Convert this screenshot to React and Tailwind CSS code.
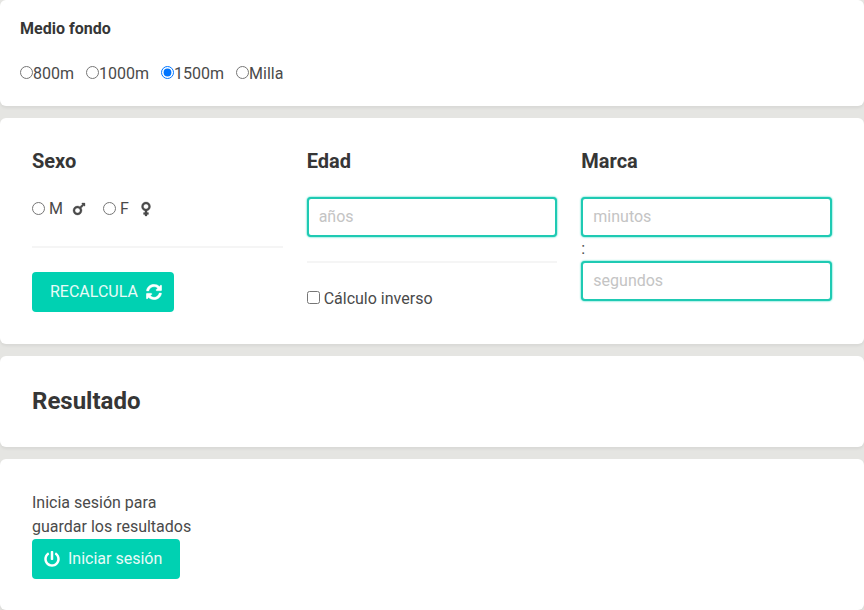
import React from 'react';
import { FaMars, FaVenus, FaSyncAlt, FaPowerOff } from 'react-icons/fa';

const Card = ({ className, children }) => (
    <div className={`bg-white rounded-md shadow-[0_2px_3px_rgba(0,0,0,0.06)] ${className}`}>{children}</div>
);

const inputClass = "block w-full h-10 px-[10px] pb-[2px] bg-white border-2 border-[#1fcab3] rounded-[4px] shadow-[0_0_2px_#00d1b2] text-base text-[#363636] outline-none placeholder:text-[#c4c4c4]";

const Distance = ({ label, checked, className }) => (
    <label className={`flex items-center ${className}`}>
        <input type="radio" name="distance" defaultChecked={checked} className="w-[13px] h-[13px] m-0 mb-[4px] accent-[#0075ff]" />
        <span>{label}</span>
    </label>
);

export default function App() {
    return (
        <div className="min-h-[610px] h-[610px] overflow-hidden bg-[#e5e5e2] text-[#4a4a4a] text-base font-['Roboto',sans-serif]">
            <Card className="h-[106px] pl-5 pt-[19px]">
                <h4 className="text-base text-[#363636] font-bold leading-[19px]">Medio fondo</h4>
                <div className="flex mt-[26px] leading-[20px]">
                    <Distance label="800m" className="mr-3" />
                    <Distance label="1000m" className="mr-3" />
                    <Distance label="1500m" checked className="mr-3" />
                    <Distance label="Milla" />
                </div>
            </Card>

            <Card className="mt-3 h-[226px] px-8 pt-8 grid grid-cols-3 gap-x-6">
                <div>
                    <h3 className="text-xl text-[#363636] font-bold leading-[24px] mt-[-1px]">Sexo</h3>
                    <div className="flex items-center mt-6 h-[24px] leading-[24px]">
                        <input type="radio" name="sexo" className="w-[13px] h-[13px] m-0 mr-1 mb-[2px] accent-[#0075ff]" />
                        <span>M</span>
                        <FaMars stroke="currentColor" strokeWidth="10" className="ml-[8px] w-4 h-4" />
                        <input type="radio" name="sexo" className="w-[13px] h-[13px] m-0 ml-[16px] mr-1 mb-[2px] accent-[#0075ff]" />
                        <span>F</span>
                        <FaVenus stroke="currentColor" strokeWidth="10" className="ml-[9px] w-4 h-4" />
                    </div>
                    <hr className="border-0 h-[2px] bg-[#f5f5f5] mt-[25px]" />
                    <button className="flex items-center mt-6 pl-[18px] w-[142px] h-10 bg-[#00d1b2] text-[#e8fbf8] rounded-[4px]">
                        RECALCULA
                        <FaSyncAlt stroke="currentColor" strokeWidth="10" className="ml-2 w-4 h-4 text-white" />
                    </button>
                </div>
                <div>
                    <h3 className="text-xl text-[#363636] font-bold leading-[24px] mt-[-1px]">Edad</h3>
                    <input placeholder="años" className={`${inputClass} mt-6`} />
                    <hr className="border-0 h-[2px] bg-[#f5f5f5] mt-6" />
                    <label className="flex items-center mt-6 leading-[24px]">
                        <input type="checkbox" className="w-[13px] h-[13px] m-0 mr-1 mb-[3px] accent-[#0075ff]" />
                        <span>Cálculo inverso</span>
                    </label>
                </div>
                <div>
                    <h3 className="text-xl text-[#363636] font-bold leading-[24px] mt-[-1px]">Marca</h3>
                    <input placeholder="minutos" className={`${inputClass} mt-6`} />
                    <div className="leading-[24px]">:</div>
                    <input placeholder="segundos" className={inputClass} />
                </div>
            </Card>

            <Card className="mt-3 h-[91px] pl-8 pt-[30px]">
                <h2 className="text-2xl text-[#363636] font-bold leading-[30px]">Resultado</h2>
            </Card>

            <Card className="mt-3 h-[151px] pl-8 pt-8">
                <p className="leading-[24px]">Inicia sesión para<br />guardar los resultados</p>
                <button className="flex items-center pl-3 w-[148px] h-10 bg-[#00d1b2] text-[#e8fbf8] rounded-[4px]">
                    <FaPowerOff className="mr-2 w-4 h-4 text-white" />
                    Iniciar sesión
                </button>
            </Card>
        </div>
    );
}
